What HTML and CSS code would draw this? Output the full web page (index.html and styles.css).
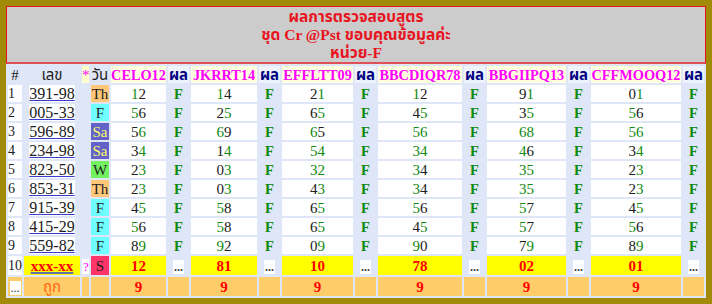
FILE: index.html
```html
<!DOCTYPE html>
<html lang="th">
<head>
<meta charset="utf-8">
<title>ผลการตรวจสอบสูตร</title>
<link rel="stylesheet" href="styles.css">
</head>
<body>
<div class="board">
  <div class="title">ผลการตรวจสอบสูตร<br>ชุด Cr @Pst ขอบคุณข้อมูลค่ะ<br>หน่วย-F</div>
  <table class="grid">
    <colgroup>
      <col class="c-idx"><col class="c-num"><col class="c-star"><col class="c-day">
      <col class="c-f1"><col class="c-r"><col class="c-f2"><col class="c-r">
      <col class="c-f3"><col class="c-r"><col class="c-f4"><col class="c-r">
      <col class="c-f5"><col class="c-r"><col class="c-f6"><col class="c-r">
    </colgroup>
    <thead>
      <tr>
        <th class="h-plain">#</th><th class="h-plain">เลข</th><th class="h-star">*</th><th class="h-plain">วัน</th>
        <th class="h-f">CELO12</th><th class="h-res">ผล</th>
        <th class="h-f">JKRRT14</th><th class="h-res">ผล</th>
        <th class="h-f">EFFLTT09</th><th class="h-res">ผล</th>
        <th class="h-f">BBCDIQR78</th><th class="h-res">ผล</th>
        <th class="h-f">BBGIIPQ13</th><th class="h-res">ผล</th>
        <th class="h-f">CFFMOOQ12</th><th class="h-res">ผล</th>
      </tr>
    </thead>
    <tbody>
      <tr>
        <td class="idx">1</td><td class="num"><a class="lnk" href="#">391-98</a></td><td></td><td class="day d-th">Th</td>
        <td class="val"><span class="g">1</span>2</td><td class="res">F</td>
        <td class="val"><span class="g">1</span>4</td><td class="res">F</td>
        <td class="val">2<span class="g">1</span></td><td class="res">F</td>
        <td class="val"><span class="g">1</span>2</td><td class="res">F</td>
        <td class="val">9<span class="g">1</span></td><td class="res">F</td>
        <td class="val">0<span class="g">1</span></td><td class="res">F</td>
      </tr>
      <tr>
        <td class="idx">2</td><td class="num"><a class="lnk" href="#">005-33</a></td><td></td><td class="day d-f">F</td>
        <td class="val"><span class="g">5</span>6</td><td class="res">F</td>
        <td class="val">2<span class="g">5</span></td><td class="res">F</td>
        <td class="val">6<span class="g">5</span></td><td class="res">F</td>
        <td class="val">4<span class="g">5</span></td><td class="res">F</td>
        <td class="val">3<span class="g">5</span></td><td class="res">F</td>
        <td class="val"><span class="g">5</span>6</td><td class="res">F</td>
      </tr>
      <tr>
        <td class="idx">3</td><td class="num"><a class="lnk" href="#">596-89</a></td><td></td><td class="day d-sa">Sa</td>
        <td class="val">5<span class="g">6</span></td><td class="res">F</td>
        <td class="val"><span class="g">6</span>9</td><td class="res">F</td>
        <td class="val"><span class="g">6</span>5</td><td class="res">F</td>
        <td class="val"><span class="g">56</span></td><td class="res">F</td>
        <td class="val"><span class="g">68</span></td><td class="res">F</td>
        <td class="val"><span class="g">56</span></td><td class="res">F</td>
      </tr>
      <tr>
        <td class="idx">4</td><td class="num"><a class="lnk" href="#">234-98</a></td><td></td><td class="day d-sa">Sa</td>
        <td class="val">3<span class="g">4</span></td><td class="res">F</td>
        <td class="val">1<span class="g">4</span></td><td class="res">F</td>
        <td class="val"><span class="g">54</span></td><td class="res">F</td>
        <td class="val"><span class="g">34</span></td><td class="res">F</td>
        <td class="val"><span class="g">4</span>6</td><td class="res">F</td>
        <td class="val">3<span class="g">4</span></td><td class="res">F</td>
      </tr>
      <tr>
        <td class="idx">5</td><td class="num"><a class="lnk" href="#">823-50</a></td><td></td><td class="day d-w">W</td>
        <td class="val">2<span class="g">3</span></td><td class="res">F</td>
        <td class="val">0<span class="g">3</span></td><td class="res">F</td>
        <td class="val"><span class="g">32</span></td><td class="res">F</td>
        <td class="val"><span class="g">3</span>4</td><td class="res">F</td>
        <td class="val"><span class="g">35</span></td><td class="res">F</td>
        <td class="val">2<span class="g">3</span></td><td class="res">F</td>
      </tr>
      <tr>
        <td class="idx">6</td><td class="num"><a class="lnk" href="#">853-31</a></td><td></td><td class="day d-th">Th</td>
        <td class="val">2<span class="g">3</span></td><td class="res">F</td>
        <td class="val">0<span class="g">3</span></td><td class="res">F</td>
        <td class="val">4<span class="g">3</span></td><td class="res">F</td>
        <td class="val"><span class="g">3</span>4</td><td class="res">F</td>
        <td class="val"><span class="g">35</span></td><td class="res">F</td>
        <td class="val">2<span class="g">3</span></td><td class="res">F</td>
      </tr>
      <tr>
        <td class="idx">7</td><td class="num"><a class="lnk" href="#">915-39</a></td><td></td><td class="day d-f">F</td>
        <td class="val">4<span class="g">5</span></td><td class="res">F</td>
        <td class="val"><span class="g">5</span>8</td><td class="res">F</td>
        <td class="val">6<span class="g">5</span></td><td class="res">F</td>
        <td class="val"><span class="g">5</span>6</td><td class="res">F</td>
        <td class="val"><span class="g">5</span>7</td><td class="res">F</td>
        <td class="val">4<span class="g">5</span></td><td class="res">F</td>
      </tr>
      <tr>
        <td class="idx">8</td><td class="num"><a class="lnk" href="#">415-29</a></td><td></td><td class="day d-f">F</td>
        <td class="val"><span class="g">5</span>6</td><td class="res">F</td>
        <td class="val"><span class="g">5</span>8</td><td class="res">F</td>
        <td class="val">6<span class="g">5</span></td><td class="res">F</td>
        <td class="val">4<span class="g">5</span></td><td class="res">F</td>
        <td class="val"><span class="g">5</span>7</td><td class="res">F</td>
        <td class="val"><span class="g">5</span>6</td><td class="res">F</td>
      </tr>
      <tr>
        <td class="idx">9</td><td class="num"><a class="lnk" href="#">559-82</a></td><td></td><td class="day d-f">F</td>
        <td class="val">8<span class="g">9</span></td><td class="res">F</td>
        <td class="val"><span class="g">9</span>2</td><td class="res">F</td>
        <td class="val">0<span class="g">9</span></td><td class="res">F</td>
        <td class="val"><span class="g">9</span>0</td><td class="res">F</td>
        <td class="val">7<span class="g">9</span></td><td class="res">F</td>
        <td class="val">8<span class="g">9</span></td><td class="res">F</td>
      </tr>
      <tr class="next">
        <td class="idx">10</td><td class="num hl"><a class="lnk lnk-next" href="#">xxx-xx</a></td><td class="star"><span class="q">?</span></td><td class="day d-s">S</td>
        <td class="val hl nv">12</td><td class="res"><span class="dots">...</span></td>
        <td class="val hl nv">81</td><td class="res"><span class="dots">...</span></td>
        <td class="val hl nv">10</td><td class="res"><span class="dots">...</span></td>
        <td class="val hl nv">78</td><td class="res"><span class="dots">...</span></td>
        <td class="val hl nv">02</td><td class="res"><span class="dots">...</span></td>
        <td class="val hl nv">01</td><td class="res"><span class="dots">...</span></td>
      </tr>
    </tbody>
    <tfoot>
      <tr>
        <td><span class="dots">...</span></td><td class="ok">ถูก</td><td></td><td></td>
        <td class="cnt">9</td><td></td>
        <td class="cnt">9</td><td></td>
        <td class="cnt">9</td><td></td>
        <td class="cnt">9</td><td></td>
        <td class="cnt">9</td><td></td>
        <td class="cnt">9</td><td></td>
      </tr>
    </tfoot>
  </table>
</div>
</body>
</html>
```

FILE: styles.css
```css
html, body {
  margin: 0;
  padding: 0;
  background: #a08a08;
}

body {
  padding: 6px;
  font-family: "Liberation Serif", Tahoma, "Noto Sans Thai", "DejaVu Sans", serif;
  font-size: 15px;
  color: #202020;
}

.board {
  width: 700px;
  background: #dfe6f7;
}

.title {
  background: #cccccc;
  border: 1px solid #e8141e;
  border-bottom: 2px solid #e05058;
  padding: 1px 0 0;
  text-align: center;
  color: #e8141e;
  font-weight: bold;
  font-size: 15.5px;
  line-height: 18px;
}

.grid {
  width: 700px;
  table-layout: fixed;
  border-collapse: separate;
  border-spacing: 2px;
}

.c-idx { width: 14px; }
.c-num { width: 56px; }
.c-star { width: 7px; }
.c-day { width: 18px; }
.c-f1 { width: 55px; }
.c-f2 { width: 66px; }
.c-f3 { width: 71px; }
.c-f4 { width: 84px; }
.c-f5 { width: 79px; }
.c-f6 { width: 90px; }
.c-r { width: 21px; }

.grid th,
.grid td {
  padding: 0;
  text-align: center;
  white-space: nowrap;
  overflow: hidden;
  line-height: 16px;
}

.grid thead th {
  height: 17px;
  font-weight: normal;
  font-size: 15px;
}

.h-plain { background: transparent; }
.h-star { background: #ffffcc; color: #ff00ff; }
.h-f {
  background: #ffffe0;
  color: #ff00ff;
  font-weight: bold !important;
  font-size: 14.3px !important;
}
.h-res {
  background: #eef2fc;
  color: #000080;
  font-weight: bold !important;
}

.grid tbody td { height: 17px; }

.idx {
  background: #ffffff;
  text-align: left !important;
  font-size: 14px;
}

.num {
  background: transparent;
  font-size: 16px;
}

.lnk {
  background: #ffffff;
  color: #202020;
  text-decoration: underline;
  text-decoration-color: #3a3ad0;
}

.day { font-size: 15px; }
.d-th { background: #ffc878; }
.d-f { background: #70ffff; }
.d-sa { background: #6262c8; color: #ffff66; }
.d-w { background: #72f060; }
.d-s { background: #ff3468; }

.val {
  background: #ffffff;
  font-size: 15px;
  color: #202020;
}

.g { color: #118a11; }

.res {
  color: #0b8a0b;
  font-weight: bold;
  font-size: 14.5px;
}

.grid tbody tr.next td { height: 19px; }
.hl { background: #ffff00; }
.nv { color: #ff0000; font-weight: bold; }

.lnk-next {
  background: transparent;
  color: #ff0000;
  font-weight: bold;
  font-size: 15px;
  text-decoration-color: #6070a0;
  text-decoration-thickness: 2px;
}

.star { background: transparent; }
.q {
  display: inline-block;
  background: #ffffff;
  color: #ff00ff;
  font-size: 13px;
  line-height: 15px;
  padding: 0 1px;
  vertical-align: middle;
}

.dots {
  display: inline-block;
  background: #ffffff;
  color: #404040;
  font-size: 12px;
  line-height: 14px;
  padding: 0 1px;
  vertical-align: middle;
}

.grid tfoot td {
  height: 19px;
  background: #ffcc6a;
}

.ok { color: #ff6a10; font-size: 15px; }
.cnt { color: #ff0000; font-weight: bold; }
```
